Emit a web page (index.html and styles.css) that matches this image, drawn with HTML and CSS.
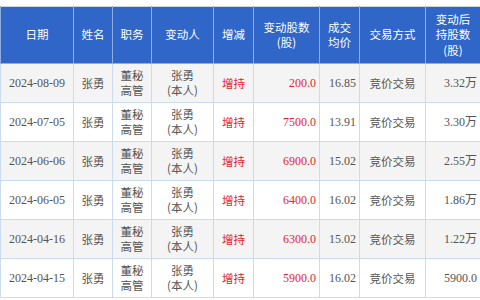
FILE: index.html
```html
<!DOCTYPE html>
<html lang="zh-CN">
<head>
    <meta charset="UTF-8">
    <title>高管持股变动</title>
    <link rel="stylesheet" href="styles.css">
</head>
<body>
    <table class="trades">
        <colgroup>
            <col class="c-date"><col class="c-name"><col class="c-role"><col class="c-who">
            <col class="c-dir"><col class="c-qty"><col class="c-price"><col class="c-way"><col class="c-hold">
        </colgroup>
        <thead>
            <tr>
                <th>日期</th>
                <th>姓名</th>
                <th>职务</th>
                <th>变动人</th>
                <th>增减</th>
                <th>变动股数<br>(股)</th>
                <th>成交<br>均价</th>
                <th>交易方式</th>
                <th>变动后<br>持股数<br>(股)</th>
            </tr>
        </thead>
        <tbody>
            <tr>
                <td class="num">2024-08-09</td><td>张勇</td><td>董秘<br>高管</td><td>张勇<br>(本人)</td>
                <td class="up">增持</td><td class="num right up">200.0</td><td class="num right">16.85</td>
                <td>竞价交易</td><td class="num right">3.32万</td>
            </tr>
            <tr>
                <td class="num">2024-07-05</td><td>张勇</td><td>董秘<br>高管</td><td>张勇<br>(本人)</td>
                <td class="up">增持</td><td class="num right up">7500.0</td><td class="num right">13.91</td>
                <td>竞价交易</td><td class="num right">3.30万</td>
            </tr>
            <tr>
                <td class="num">2024-06-06</td><td>张勇</td><td>董秘<br>高管</td><td>张勇<br>(本人)</td>
                <td class="up">增持</td><td class="num right up">6900.0</td><td class="num right">15.02</td>
                <td>竞价交易</td><td class="num right">2.55万</td>
            </tr>
            <tr>
                <td class="num">2024-06-05</td><td>张勇</td><td>董秘<br>高管</td><td>张勇<br>(本人)</td>
                <td class="up">增持</td><td class="num right up">6400.0</td><td class="num right">16.02</td>
                <td>竞价交易</td><td class="num right">1.86万</td>
            </tr>
            <tr>
                <td class="num">2024-04-16</td><td>张勇</td><td>董秘<br>高管</td><td>张勇<br>(本人)</td>
                <td class="up">增持</td><td class="num right up">6300.0</td><td class="num right">15.02</td>
                <td>竞价交易</td><td class="num right">1.22万</td>
            </tr>
            <tr>
                <td class="num">2024-04-15</td><td>张勇</td><td>董秘<br>高管</td><td>张勇<br>(本人)</td>
                <td class="up">增持</td><td class="num right up">5900.0</td><td class="num right">16.02</td>
                <td>竞价交易</td><td class="num right">5900.0</td>
            </tr>
        </tbody>
    </table>
</body>
</html>
```

FILE: styles.css
```css
body {
    margin: 0;
    padding-top: 6px;
    background: #ffffff;
    font-family: "Noto Sans CJK SC", sans-serif;
}

.trades {
    width: 480px;
    border-collapse: collapse;
    table-layout: fixed;
    border: 1px solid #d4d4d4;
    font-size: 11.5px;
    color: #555;
}

.c-date { width: 73px; }
.c-name { width: 39px; }
.c-role { width: 39px; }
.c-who { width: 62px; }
.c-dir { width: 40px; }
.c-qty { width: 66px; }
.c-price { width: 40px; }
.c-way { width: 66px; }
.c-hold { width: 55px; }

th {
    height: 56px;
    padding: 0;
    background: #2f66c8;
    color: #ffffff;
    font-weight: normal;
    line-height: 15.5px;
    border: 1px solid #8eaee0;
    border-top: none;
}

td {
    height: 38px;
    padding: 0 3px;
    text-align: center;
    line-height: 15px;
    border: 1px solid #cadcef;
    white-space: nowrap;
}

tbody tr:nth-child(odd) {
    background: #f4f4f4;
}

.num {
    font-family: "Liberation Serif", "Noto Sans CJK SC", serif;
    font-size: 12px;
}

.right {
    text-align: right;
}

.up {
    color: #e8232b;
}
```
